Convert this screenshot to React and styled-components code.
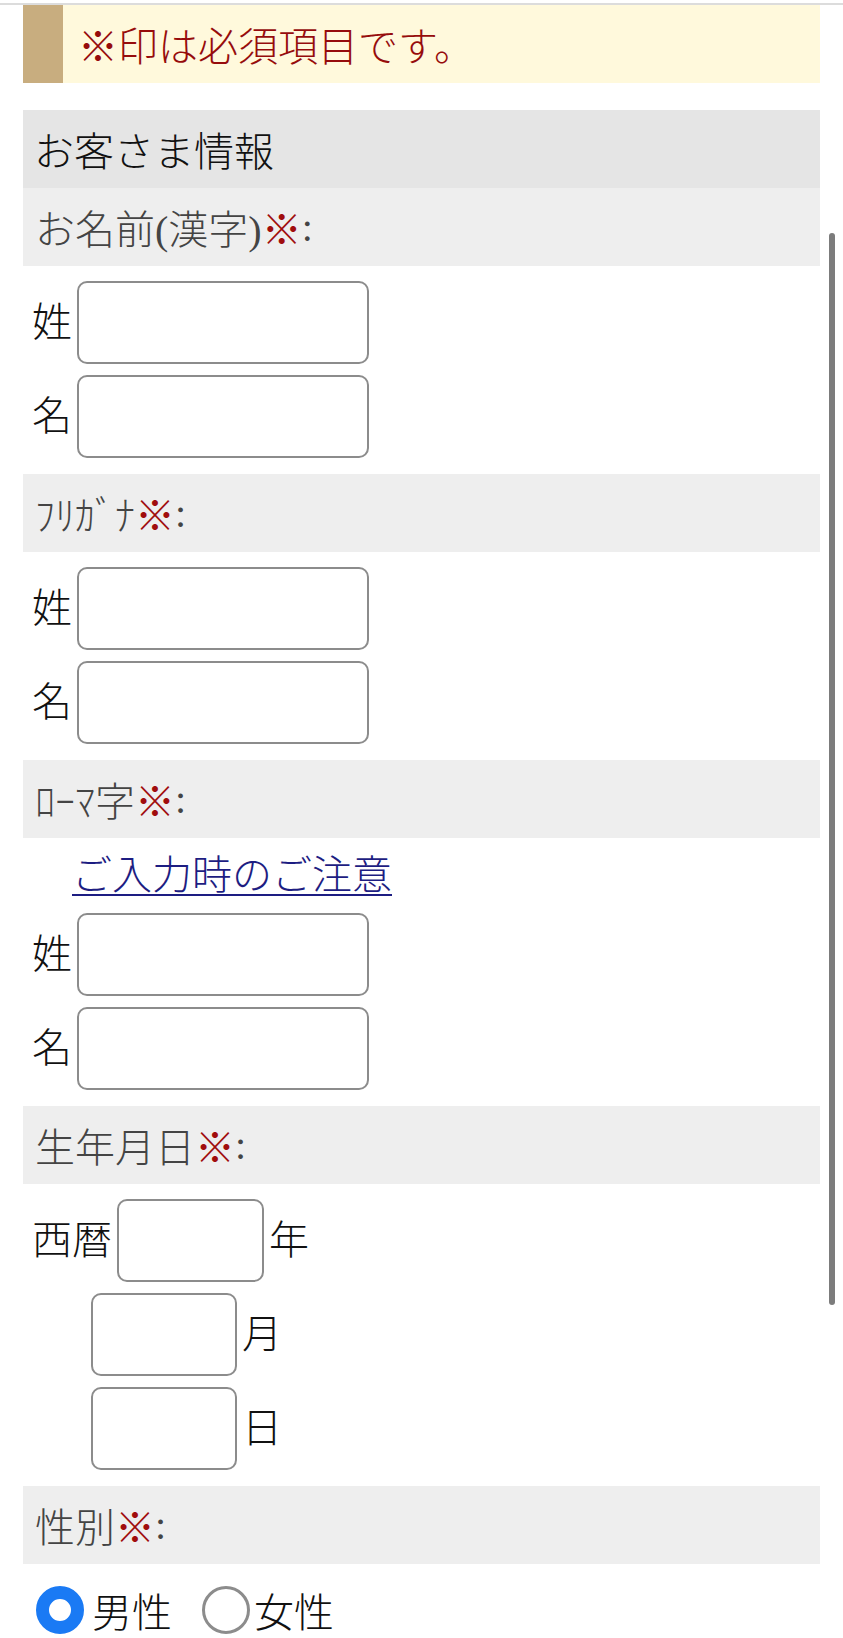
import React from 'react';
import styled, { createGlobalStyle } from 'styled-components';

const GlobalStyle = createGlobalStyle`
	html, body {
		margin: 0;
		padding: 0;
		background: #fff;
	}
	body {
		font-family: 'Liberation Serif', 'Noto Sans CJK JP', serif;
		color: #111;
	}
`;

const Page = styled.div`
	padding-top: 3px;
`;

const TopRule = styled.div`
	height: 2px;
	background: #dcdcdc;
`;

const Content = styled.div`
	margin: 0 23px;
`;

const Notice = styled.div`
	display: flex;
	align-items: center;
	height: 78px;
	border-left: 40px solid #c8ad7f;
	background: #fff9dc;
	padding-left: 15px;
	font-size: 40px;
	font-weight: 300;
	color: #960c0c;
	margin-bottom: 27px;
`;

const SectionTitle = styled.div`
	display: flex;
	align-items: center;
	height: 78px;
	padding-left: 11px;
	background: #e5e5e5;
	font-size: 40px;
	font-weight: 300;
	color: #111;
`;

const FieldHead = styled.div`
	display: flex;
	align-items: center;
	height: 78px;
	padding-left: 12px;
	background: #eeeeee;
	font-size: 40px;
	font-weight: 300;
	color: #444;
`;

const Required = styled.span`
	color: #a00d0d;
`;

const FieldBody = styled.div`
	display: flex;
	flex-direction: column;
	gap: 11px;
	padding: 15px 0 16px 9px;
`;

const Row = styled.div`
	display: flex;
	align-items: center;
	gap: 5px;
	margin-left: ${(p) => p.indent || 0}px;
	font-size: 40px;
	font-weight: 300;
	color: #111;
`;

const Label = styled.span`
	line-height: 1;
`;

const TextBox = styled.input`
	box-sizing: border-box;
	width: ${(p) => p.w || 292}px;
	height: 83px;
	border: 2px solid #8c8c8c;
	border-radius: 10px;
	background: #fff;
	margin: 0;
	padding: 0 8px;
	font-size: 30px;
	outline: none;
`;

const NoteLink = styled.a`
	display: block;
	height: 49px;
	margin-left: 40px;
	font-size: 40px;
	font-weight: 300;
	line-height: 46px;
	color: #1d1d82;
	text-decoration: underline;
	text-decoration-thickness: 2px;
	text-underline-offset: 5px;
`;

const RadioRow = styled.div`
	display: flex;
	align-items: center;
	padding: 17px 0 0 13px;
	font-size: 40px;
	font-weight: 300;
	color: #111;
`;

const RadioLabel = styled.label`
	display: flex;
	align-items: center;
	gap: ${(p) => (p.checked ? 8 : 4)}px;
	margin-right: 30px;
`;

const RadioDot = styled.span`
	box-sizing: border-box;
	width: 48px;
	height: 48px;
	border-radius: 50%;
	background: #fff;
	border: ${(p) => (p.checked ? '13px solid #1a7af4' : '3px solid #8c8c8c')};
`;

const ScrollThumb = styled.div`
	position: fixed;
	top: 233px;
	right: 8px;
	width: 6px;
	height: 1072px;
	border-radius: 3px;
	background: #7c7c7c;
`;

const Req = () => (
	<>
		<Required>※</Required>:
	</>
);

const NamePair = () => (
	<>
		<Row>
			<Label>姓</Label>
			<TextBox type="text" />
		</Row>
		<Row>
			<Label>名</Label>
			<TextBox type="text" />
		</Row>
	</>
);

const App = () => (
	<Page>
		<GlobalStyle />
		<TopRule />
		<Content>
			<Notice>※印は必須項目です。</Notice>

			<SectionTitle>お客さま情報</SectionTitle>

			<FieldHead>
				お名前(漢字)
				<Req />
			</FieldHead>
			<FieldBody>
				<NamePair />
			</FieldBody>

			<FieldHead>
				ﾌﾘｶﾞﾅ
				<Req />
			</FieldHead>
			<FieldBody>
				<NamePair />
			</FieldBody>

			<FieldHead>
				ﾛｰﾏ字
				<Req />
			</FieldHead>
			<FieldBody>
				<NoteLink href="#">ご入力時のご注意</NoteLink>
				<NamePair />
			</FieldBody>

			<FieldHead>
				生年月日
				<Req />
			</FieldHead>
			<FieldBody>
				<Row>
					<Label>西暦</Label>
					<TextBox type="text" w={147} />
					<Label>年</Label>
				</Row>
				<Row indent={59}>
					<TextBox type="text" w={146} />
					<Label>月</Label>
				</Row>
				<Row indent={59}>
					<TextBox type="text" w={146} />
					<Label>日</Label>
				</Row>
			</FieldBody>

			<FieldHead>
				性別
				<Req />
			</FieldHead>
			<RadioRow>
				<RadioLabel checked>
					<RadioDot checked />
					男性
				</RadioLabel>
				<RadioLabel>
					<RadioDot />
					女性
				</RadioLabel>
			</RadioRow>
		</Content>
		<ScrollThumb />
	</Page>
);

export default App;
